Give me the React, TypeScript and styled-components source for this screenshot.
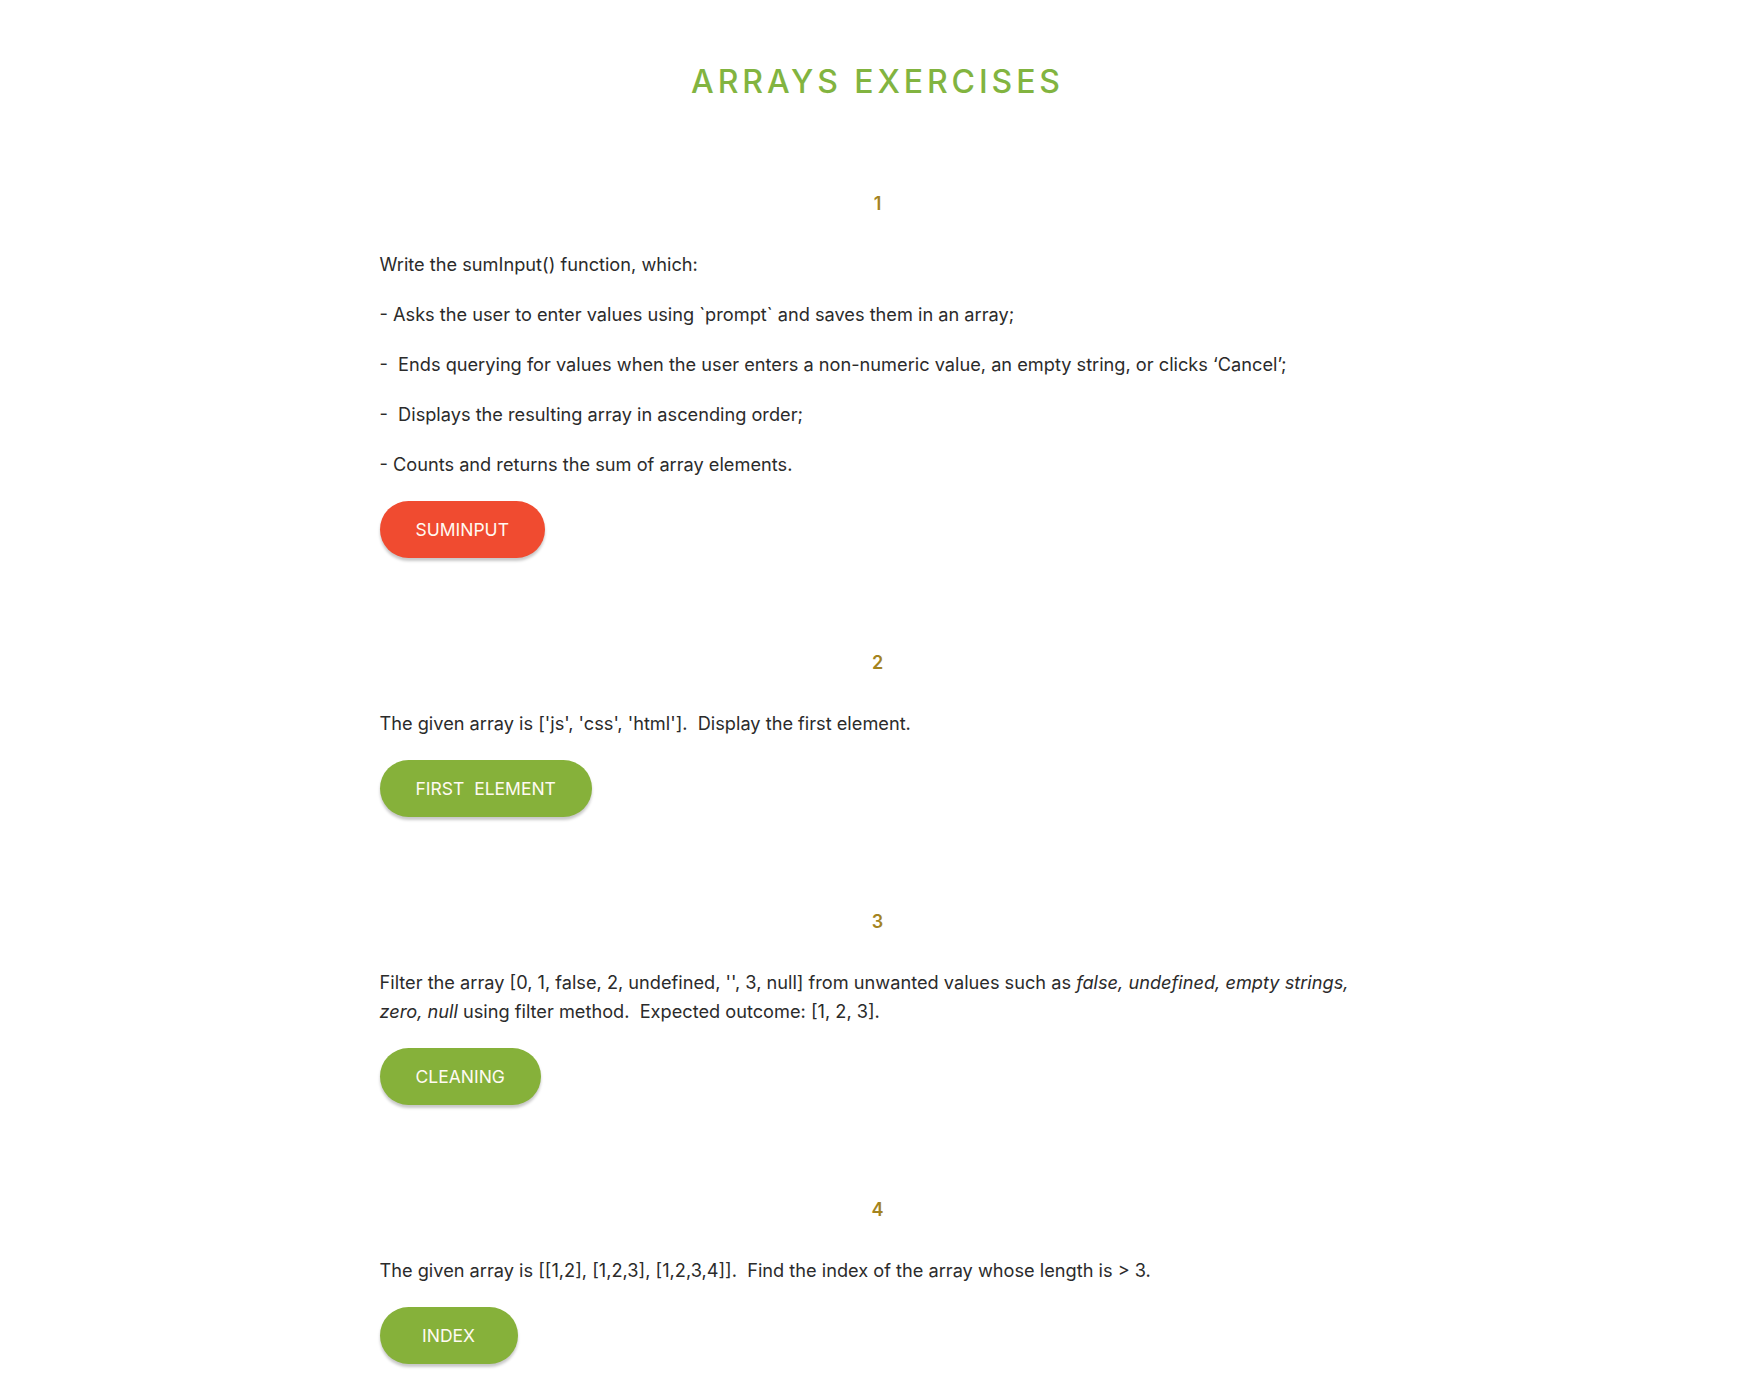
import React from "react";
import styled, { createGlobalStyle } from "styled-components";

const GlobalStyle = createGlobalStyle`
  html, body {
    margin: 0;
    padding: 0;
    background: #ffffff;
  }
  body {
    font-family: Inter, "Noto Sans", "Liberation Sans", sans-serif;
    color: #2b2b2b;
  }
  * { box-sizing: border-box; }
`;

const Page = styled.main`
  width: 996px;
  margin: 0 auto;
  padding: 62px 0 60px;
  display: flex;
  flex-direction: column;
`;

const Title = styled.h1`
  margin: 0 0 90px;
  font-size: 32px;
  line-height: 40px;
  font-weight: 500;
  letter-spacing: 3.9px;
  text-align: center;
  color: #82b440;
`;

const Exercises = styled.div`
  display: flex;
  flex-direction: column;
  gap: 93.5px;
`;

const Exercise = styled.section`
  display: flex;
  flex-direction: column;
  align-items: flex-start;
`;

const Number = styled.h3`
  align-self: stretch;
  margin: 0 0 34px;
  font-size: 18px;
  line-height: 24px;
  font-weight: 600;
  text-align: center;
  color: #a4841f;
`;

const Task = styled.div`
  display: flex;
  flex-direction: column;
  gap: 21px;
  margin-bottom: 21.5px;
`;

const Line = styled.p`
  margin: 0;
  font-size: 18.2px;
  line-height: 29px;
  white-space: pre-wrap;
  color: #2b2b2b;
`;

const Em = styled.i`
  font-style: italic;
`;

const Button = styled.button<{ $variant?: "red" | "green" }>`
  display: inline-flex;
  align-items: center;
  justify-content: center;
  min-width: 138px;
  height: 57px;
  padding: 0 36px;
  border: none;
  border-radius: 29px;
  background: ${(p) => (p.$variant === "red" ? "#f04b30" : "#86b13a")};
  box-shadow: 0 3px 3px rgba(0, 0, 0, 0.22);
  color: #fffaf2;
  font-family: Inter, "Noto Sans", sans-serif;
  font-size: 17.5px;
  font-weight: 400;
  text-transform: uppercase;
  white-space: pre;
  cursor: pointer;
`;

export default function App() {
  return (
    <>
      <GlobalStyle />
      <Page>
        <Title>ARRAYS EXERCISES</Title>
        <Exercises>
          <Exercise>
            <Number>1</Number>
            <Task>
              <Line>Write the sumInput() function, which:</Line>
              <Line>- Asks the user to enter values using `prompt` and saves them in an array;</Line>
              <Line>{"-  Ends querying for values when the user enters a non-numeric value, an empty string, or clicks \u2018Cancel\u2019;"}</Line>
              <Line>{"-  Displays the resulting array in ascending order;"}</Line>
              <Line>- Counts and returns the sum of array elements.</Line>
            </Task>
            <Button $variant="red">SUMINPUT</Button>
          </Exercise>

          <Exercise>
            <Number>2</Number>
            <Task>
              <Line>{"The given array is ['js', 'css', 'html'].  Display the first element."}</Line>
            </Task>
            <Button>{"FIRST  ELEMENT"}</Button>
          </Exercise>

          <Exercise>
            <Number>3</Number>
            <Task>
              <Line>
                {"Filter the array [0, 1, false, 2, undefined, '', 3, null] from unwanted values such as "}
                <Em>false, undefined, empty strings, zero, null</Em>
                {" using filter method.  Expected outcome: [1, 2, 3]."}
              </Line>
            </Task>
            <Button>CLEANING</Button>
          </Exercise>

          <Exercise>
            <Number>4</Number>
            <Task>
              <Line>{"The given array is [[1,2], [1,2,3], [1,2,3,4]].  Find the index of the array whose length is > 3."}</Line>
            </Task>
            <Button>INDEX</Button>
          </Exercise>
        </Exercises>
      </Page>
    </>
  );
}
